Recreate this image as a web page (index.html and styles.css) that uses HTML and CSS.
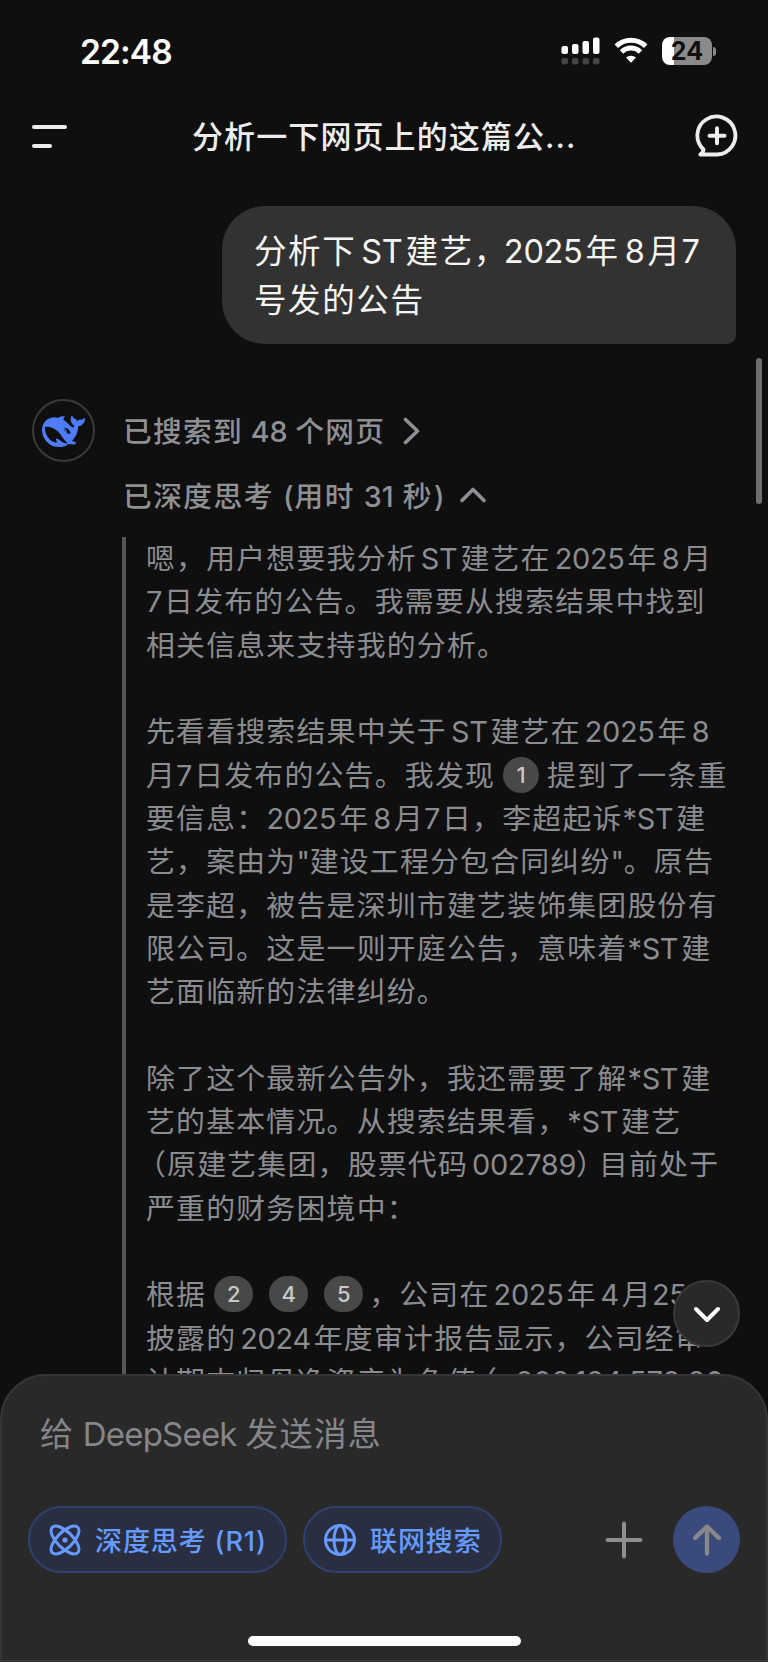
FILE: index.html
```
<!DOCTYPE html>
<html lang="zh-CN">
<head>
  <meta charset="UTF-8">
  <title>DeepSeek</title>
  <link rel="stylesheet" href="styles.css">
</head>
<body>
  <div class="app">

    <div class="status">
      <span class="time">22:48</span>
      <div class="status-icons">
        <svg class="signal" width="40" height="28" viewBox="0 0 40 28">
          <g fill="#fff">
            <rect x="0.5" y="9" width="6.5" height="8" rx="2"/>
            <rect x="11" y="7" width="6.5" height="10" rx="2"/>
            <rect x="21.5" y="4" width="6.5" height="13" rx="2"/>
            <rect x="32" y="0.5" width="6.5" height="16.5" rx="2"/>
          </g>
          <g fill="#444">
            <rect x="0.5" y="21" width="6.5" height="6.5" rx="2"/>
            <rect x="11" y="21" width="6.5" height="6.5" rx="2"/>
            <rect x="21.5" y="21" width="6.5" height="6.5" rx="2"/>
            <rect x="32" y="21" width="6.5" height="6.5" rx="2"/>
          </g>
        </svg>
        <svg class="wifi" width="34" height="28" viewBox="0 0 34 28">
          <g fill="none" stroke="#fff" stroke-width="5">
            <path d="M2.3 9.2a21 21 0 0 1 29.4 0"/>
            <path d="M7.6 15a13.3 13.3 0 0 1 18.8 0"/>
          </g>
          <path fill="#fff" d="M17 25.8l-5-5.2a7.4 7.4 0 0 1 10 0z"/>
        </svg>
        <div class="battery"><span>24</span></div>
        <i class="battery-cap"></i>
      </div>
    </div>

    <div class="header">
      <div class="menu"><i></i><i></i></div>
      <h1>分析一下网页上的这篇公<span class="dots">...</span></h1>
      <svg class="new-chat" width="44" height="44" viewBox="0 0 44 44" fill="none" stroke="#ededed" stroke-width="3.8" stroke-linecap="round" stroke-linejoin="round">
        <path d="M22.3 40.5H5.3c1.6-1.3 3.3-3.2 3.2-5A19 19 0 1 1 22.3 40.5z"/>
        <path d="M14.5 21.8h15M22 14.3v15" stroke-width="4"/>
      </svg>
    </div>

    <div class="chat">
      <div class="bubble">
        <div>分析下<b class="en">ST</b>建艺，<b class="en start">2025</b>年<b class="en">8</b>月<b class="en tight">7</b></div>
        <div>号发的公告</div>
      </div>

      <div class="reply">
        <div class="avatar">
          <svg width="43" height="43" viewBox="0 0 24 24"><path fill="#4d7cf6" d="M23.748 4.482c-.254-.124-.364.113-.512.234-.051.039-.094.09-.137.136-.372.397-.806.657-1.373.626-.829-.046-1.537.214-2.163.848-.133-.782-.575-1.248-1.247-1.548-.352-.156-.708-.311-.955-.65-.172-.241-.219-.51-.305-.774-.055-.16-.11-.323-.293-.35-.2-.031-.278.136-.356.276-.313.572-.434 1.202-.422 1.84.027 1.436.633 2.58 1.838 3.393.137.093.172.187.129.323-.082.28-.18.552-.266.833-.055.179-.137.217-.329.14a5.526 5.526 0 01-1.736-1.18c-.857-.828-1.631-1.742-2.597-2.458a11.365 11.365 0 00-.689-.471c-.985-.957.13-1.743.388-1.836.27-.098.093-.432-.779-.428-.872.004-1.67.295-2.687.684a3.055 3.055 0 01-.465.137 9.597 9.597 0 00-2.883-.102c-1.885.21-3.39 1.102-4.497 2.623C.082 8.606-.231 10.684.152 12.85c.403 2.284 1.569 4.175 3.36 5.653 1.858 1.533 3.997 2.284 6.438 2.14 1.482-.085 3.133-.284 4.994-1.86.47.234.962.327 1.78.397.63.059 1.236-.03 1.705-.128.735-.156.684-.837.419-.961-2.155-1.004-1.682-.595-2.113-.926 1.096-1.296 2.746-2.642 3.392-7.003.05-.347.007-.565 0-.845-.004-.17.035-.237.23-.256a4.173 4.173 0 001.545-.475c1.396-.763 1.96-2.015 2.093-3.517.02-.23-.004-.467-.247-.588zM11.581 18c-2.089-1.642-3.102-2.183-3.52-2.16-.392.024-.321.471-.235.763.09.288.207.486.371.739.114.167.192.416-.113.603-.673.416-1.842-.14-1.897-.167-1.361-.802-2.5-1.86-3.301-3.307-.774-1.393-1.224-2.887-1.298-4.482-.02-.386.093-.522.477-.592a4.696 4.696 0 011.529-.039c2.132.312 3.946 1.265 5.468 2.774.868.86 1.525 1.887 2.202 2.891.72 1.066 1.494 2.082 2.48 2.914.348.292.625.514.891.677-.802.09-2.14.11-3.054-.614zm1-6.44a.306.306 0 01.415-.287.302.302 0 01.2.288.306.306 0 01-.31.307.303.303 0 01-.304-.308zm3.11 1.596c-.2.081-.399.151-.59.16a1.245 1.245 0 01-.798-.254c-.274-.23-.47-.358-.552-.758a1.73 1.73 0 01.016-.588c.07-.327-.008-.537-.239-.727-.187-.156-.426-.199-.688-.199a.559.559 0 01-.254-.078c-.11-.054-.2-.19-.114-.358.028-.054.16-.186.192-.21.356-.202.767-.136 1.146.016.352.144.618.408 1.001.782.391.451.462.576.685.914.176.265.336.537.445.848.067.195-.019.354-.25.452z"/></svg>
        </div>
        <div class="content">
          <div class="step">
            <span>已搜索到 <b class="en">48</b> 个网页</span>
            <svg width="18" height="28" viewBox="0 0 18 28"><path d="M2.5 2.5L14.5 14L2.5 25.5"/></svg>
          </div>
          <div class="step think">
            <span>已深度思考 <b class="en">(</b>用时 <b class="en">31</b> 秒<b class="en">)</b></span>
            <svg width="28" height="18" viewBox="0 0 28 18"><path d="M3 14.5L14 3.5L25 14.5"/></svg>
          </div>

          <div class="thinking">
            <p>嗯，用户想要我分析<b class="en">ST</b>建艺在<b class="en">2025</b>年<b class="en">8</b>月</p>
            <p><b class="en day">7</b>日发布的公告。我需要从搜索结果中找到</p>
            <p>相关信息来支持我的分析。</p>
            <p class="gap">先看看搜索结果中关于<b class="en">ST</b>建艺在<b class="en">2025</b>年<b class="en">8</b></p>
            <p>月<b class="en day">7</b>日发布的公告。我发现<i class="ref one">1</i>提到了一条重</p>
            <p>要信息：<b class="en start">2025</b>年<b class="en">8</b>月<b class="en day">7</b>日，李超起诉<b class="en start">*ST</b>建</p>
            <p>艺，案由为<b class="en tight">"</b>建设工程分包合同纠纷<b class="en tight">"</b>。原告</p>
            <p>是李超，被告是深圳市建艺装饰集团股份有</p>
            <p>限公司。这是一则开庭公告，意味着<b class="en start">*ST</b>建</p>
            <p>艺面临新的法律纠纷。</p>
            <p class="gap">除了这个最新公告外，我还需要了解<b class="en start">*ST</b>建</p>
            <p>艺的基本情况。从搜索结果看，<b class="en start">*ST</b>建艺</p>
            <p><span class="open">（</span>原建艺集团，股票代码<b class="en end">002789</b><span class="close">）</span>目前处于</p>
            <p>严重的财务困境中：</p>
            <p class="gap">根据<i class="ref">2</i><i class="ref">4</i><i class="ref">5</i>，公司在<b class="en">2025</b>年<b class="en">4</b>月<b class="en start">25</b></p>
            <p>披露的<b class="en">2024</b>年度审计报告显示，公司经审</p>
            <p>计期末归母净资产为负值<span class="open">（</span><b class="en amount">-808,124,578.86</b></p>
          </div>
        </div>
      </div>
      <i class="scrollbar"></i>
    </div>

    <div class="to-bottom">
      <svg width="30" height="20" viewBox="0 0 30 20"><path d="M4 4L15 15L26 4"/></svg>
    </div>

    <div class="composer">
      <div class="placeholder">给 <b class="en">DeepSeek</b> 发送消息</div>
      <div class="tools">
        <div class="chip">
          <svg width="34" height="34" viewBox="0 0 34 34">
            <ellipse cx="17" cy="17" rx="18" ry="8" transform="rotate(45 17 17)"/>
            <ellipse cx="17" cy="17" rx="18" ry="8" transform="rotate(-45 17 17)"/>
            <circle class="dot" cx="17" cy="17" r="2.6"/>
          </svg>
          <span>深度思考 <b class="en">(R1)</b></span>
        </div>
        <div class="chip web">
          <svg width="34" height="34" viewBox="0 0 34 34">
            <circle cx="17" cy="17" r="14.5"/>
            <ellipse cx="17" cy="17" rx="6" ry="14.5"/>
            <path d="M2.5 17h29"/>
          </svg>
          <span>联网搜索</span>
        </div>
        <svg class="plus" width="38" height="38" viewBox="0 0 38 38"><path d="M2.5 19h33M19 2.5v33"/></svg>
        <div class="send">
          <svg width="34" height="34" viewBox="0 0 34 34"><path d="M17 30.5V4M5.2 14.8L17 3.5L28.8 14.8"/></svg>
        </div>
      </div>
      <i class="home-bar"></i>
    </div>

  </div>
</body>
</html>
```
FILE: styles.css
```
html {
  background: #fff;
}

body {
  margin: 0;
  font-family: "Noto Sans CJK SC", sans-serif;
}

.app {
  position: relative;
  display: flex;
  flex-direction: column;
  width: 768px;
  height: 1662px;
  background: #0f0f0f;
  overflow: hidden;
}

.en {
  font-family: Inter, sans-serif;
  font-weight: inherit;
  line-height: 1;
  letter-spacing: -0.3px;
}

i {
  font-style: normal;
}

/* status bar */
.status {
  display: flex;
  justify-content: space-between;
  align-items: center;
  height: 102px;
  padding: 0 52px 0 80px;
  box-sizing: border-box;
}

.time {
  padding-top: 1px;
  font: 600 33.5px Inter, sans-serif;
  letter-spacing: -0.9px;
  color: #fff;
}

.status-icons {
  display: flex;
  align-items: center;
}

.wifi {
  margin: 0 14px 0 13px;
}

.battery {
  width: 50px;
  height: 28px;
  border-radius: 8px;
  background: linear-gradient(to right, #fff 12px, #8a8a8a 12px);
  font: 700 25px/28px Inter, sans-serif;
  color: #0f0f0f;
  text-align: center;
}

.battery-cap {
  width: 3px;
  height: 9px;
  margin-left: 1px;
  border-radius: 0 4px 4px 0;
  background: #8a8a8a;
}

/* header */
.header {
  display: flex;
  align-items: center;
  height: 68px;
  padding: 0 29px 0 32px;
}

.menu {
  display: flex;
  flex-direction: column;
  gap: 15px;
  width: 160px;
}

.menu i {
  width: 35px;
  height: 4px;
  border-radius: 2px;
  background: #ededed;
}

.menu i + i {
  width: 20px;
}

h1 {
  flex: 1;
  margin: 0;
  font-size: 31px;
  font-weight: 500;
  line-height: 44px;
  letter-spacing: 1.1px;
  color: #ededed;
}

.dots {
  font-family: Inter, sans-serif;
}

/* chat */
.chat {
  position: relative;
  flex: 1;
  padding-top: 36px;
}

.bubble {
  width: 514px;
  height: 138px;
  margin-left: 222px;
  padding: 18px 0 0 32px;
  box-sizing: border-box;
  border-radius: 43px 43px 9px 43px;
  background: #323232;
  color: #f5f5f5;
  font-size: 32.5px;
  line-height: 49.3px;
  letter-spacing: 1.6px;
  white-space: nowrap;
}

.bubble .en {
  margin: 0 3px 0 5px;
}

.bubble .start {
  margin-left: -4px;
}

.bubble .tight {
  margin: 0;
}

.reply {
  display: flex;
  align-items: flex-start;
  margin-top: 55px;
  padding-left: 32px;
}

.avatar {
  display: flex;
  align-items: center;
  justify-content: center;
  width: 63px;
  height: 63px;
  padding-top: 2px;
  box-sizing: border-box;
  border: 2px solid #3a3a3a;
  border-radius: 50%;
}

.content {
  margin-left: 27px;
}

.step {
  display: flex;
  align-items: center;
  height: 64px;
  font-size: 28.7px;
  font-weight: 500;
  letter-spacing: 1.3px;
  color: #8f9094;
  white-space: nowrap;
}

.step span {
  padding: 0 0 4px 1px;
}

.step .en {
  letter-spacing: 0;
}

.step svg {
  margin-left: 18px;
  fill: none;
  stroke: #8f9094;
  stroke-width: 3.6;
  stroke-linecap: round;
  stroke-linejoin: round;
}

.step.think {
  letter-spacing: 1.5px;
}

.step.think span {
  padding-bottom: 2px;
}

.step.think .en {
  margin: 0 1px;
}

.step.think svg {
  margin-left: 14px;
}

.thinking {
  display: flow-root;
  margin-top: 10px;
  height: 860px;
  padding-left: 20px;
  border-left: 4px solid #55565a;
  font-size: 28.9px;
  line-height: 43.32px;
  letter-spacing: 1.2px;
  color: #8b8c90;
  white-space: nowrap;
}

.thinking p {
  margin: 0;
  height: 43.32px;
}

.thinking p:first-child {
  margin-top: -2px;
}

.thinking .gap {
  margin-top: 43.32px;
}

.thinking .en {
  margin: 0 3px 0 4px;
}

.thinking .start {
  margin-left: 0;
}

.thinking .end {
  margin-right: 0;
}

.thinking .tight {
  margin: 0;
}

.thinking .day {
  margin: 0 2px 0 0;
}

.thinking .amount {
  letter-spacing: 0;
}

.open {
  margin-left: -9px;
}

.close {
  letter-spacing: -6px;
}

.ref {
  display: inline-block;
  width: 39px;
  height: 36px;
  margin: 0 8px;
  border-radius: 18px;
  background: #484848;
  color: #c8c8c8;
  font: 500 22px/36px Inter, sans-serif;
  letter-spacing: 0;
  text-align: center;
  vertical-align: 3px;
}

.ref:last-of-type {
  margin-right: 6px;
}

.ref.one {
  width: 36px;
  margin: 0 8px;
}

.scrollbar {
  position: absolute;
  right: 6px;
  top: 188px;
  width: 6px;
  height: 146px;
  border-radius: 3px;
  background: #6e6e6e;
}

.to-bottom {
  position: absolute;
  left: 673px;
  top: 1280px;
  display: flex;
  align-items: center;
  justify-content: center;
  width: 67px;
  height: 67px;
  padding-top: 3px;
  box-sizing: border-box;
  border: 2px solid #393939;
  border-radius: 50%;
  background: #292929;
}

.to-bottom path {
  fill: none;
  stroke: #fff;
  stroke-width: 4;
  stroke-linecap: round;
  stroke-linejoin: round;
}

/* composer */
.composer {
  position: absolute;
  left: 0;
  right: 0;
  bottom: 0;
  display: flex;
  flex-direction: column;
  height: 288px;
  padding: 32px 26px 0;
  box-sizing: border-box;
  border: 2px solid #353535;
  border-radius: 46px 46px 0 0;
  background: #292929;
}

.placeholder {
  padding-left: 12px;
  font-size: 33px;
  line-height: 48px;
  letter-spacing: 1.2px;
  color: #86868a;
}

.placeholder .en {
  letter-spacing: -0.8px;
}

.tools {
  display: flex;
  align-items: center;
  margin-top: 50px;
}

.chip {
  display: flex;
  align-items: center;
  width: 259px;
  height: 67px;
  padding-left: 18px;
  box-sizing: border-box;
  border: 2px solid #2f4170;
  border-radius: 34px;
  background: #292f40;
  color: #669aff;
  font-size: 27px;
  font-weight: 500;
  letter-spacing: 0.9px;
  white-space: nowrap;
}

.chip .en {
  margin-left: 1px;
  letter-spacing: 0.9px;
}

.chip svg {
  margin-right: 13px;
  fill: none;
  stroke: #669aff;
  stroke-width: 3;
}

.chip span {
  padding-bottom: 1px;
}

.chip .dot {
  fill: #669aff;
  stroke: none;
}

.chip.web {
  width: 199px;
  margin-left: 16px;
}

.plus {
  margin-left: 103px;
  stroke: #8f8f8f;
  stroke-width: 4;
  stroke-linecap: round;
}

.send {
  display: flex;
  align-items: center;
  justify-content: center;
  width: 67px;
  height: 67px;
  margin-left: 30px;
  border-radius: 50%;
  background: #3a4a7c;
}

.send path {
  fill: none;
  stroke: #87888a;
  stroke-width: 4.4;
  stroke-linecap: round;
  stroke-linejoin: round;
}

.home-bar {
  width: 273px;
  height: 10px;
  margin: 63px 0 0 220px;
  border-radius: 5px;
  background: #fff;
}
```
